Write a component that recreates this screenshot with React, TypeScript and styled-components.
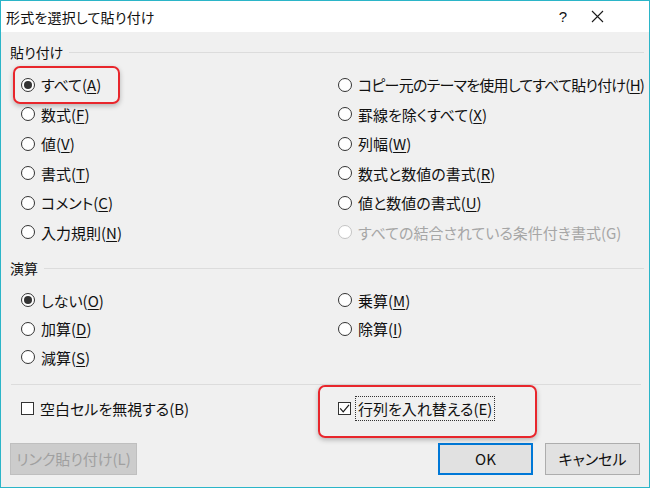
import React from 'react';
import styled, { createGlobalStyle } from 'styled-components';

const GlobalStyle = createGlobalStyle`
    html, body {
        margin: 0;
        padding: 0;
        background: #ffffff;
    }
    body {
        font-family: "Noto Sans CJK JP", "Noto Sans", sans-serif;
        font-feature-settings: "palt";
        color: #111111;
    }
`;

const Window = styled.div`
    width: 650px;
    height: 488px;
    box-sizing: border-box;
    border: 1px solid #2bb5c8;
    background: #f0f0f0;
    display: flex;
    flex-direction: column;
`;

const TitleBar = styled.div`
    height: 31px;
    background: #ffffff;
    display: flex;
    align-items: center;
    padding-left: 5px;
    padding-right: 35px;
    font-size: 14px;
    flex-shrink: 0;
`;

const Title = styled.div`
    flex: 1;
    letter-spacing: 0.2px;
`;

const TitleButton = styled.div`
    width: 34px;
    height: 31px;
    display: flex;
    align-items: center;
    justify-content: center;
    font-size: 15px;
    font-family: "Liberation Sans", sans-serif;
`;

const Body = styled.div`
    flex: 1;
    display: flex;
    flex-direction: column;
    padding: 0 9px 0 9px;
`;

const GroupHeader = styled.div<{ $top: number }>`
    display: flex;
    align-items: center;
    gap: 6px;
    margin-top: ${(p) => p.$top}px;
    height: 20px;
    font-size: 14px;
    &::after {
        content: '';
        flex: 1;
        height: 1px;
        background: #dcdcdc;
        margin-right: -4px;
    }
`;

const OptionGrid = styled.div<{ $top: number; $row: number; $rows: number }>`
    display: grid;
    grid-template-columns: 317px 1fr;
    grid-auto-flow: column;
    grid-template-rows: repeat(${(p) => p.$rows}, ${(p) => p.$row}px);
    margin-top: ${(p) => p.$top}px;
    padding-left: 11px;
`;

const Option = styled.label<{ $disabled?: boolean; $tight?: boolean }>`
    position: relative;
    display: flex;
    align-items: center;
    gap: 6px;
    font-size: 15px;
    white-space: nowrap;
    letter-spacing: ${(p) => (p.$tight ? '-0.75px' : 'normal')};
    color: ${(p) => (p.$disabled ? '#a6a6a6' : '#111111')};
`;

const Radio = styled.span<{ $checked?: boolean; $disabled?: boolean }>`
    width: 14px;
    height: 14px;
    box-sizing: border-box;
    border-radius: 50%;
    border: 1px solid ${(p) => (p.$disabled ? '#c4c4c4' : '#333333')};
    background: #ffffff;
    display: flex;
    align-items: center;
    justify-content: center;
    flex-shrink: 0;
    &::after {
        content: '';
        width: 8px;
        height: 8px;
        border-radius: 50%;
        background: ${(p) => (p.$checked ? '#333333' : 'transparent')};
    }
`;

const Key = styled.span`
    text-decoration: underline;
    text-underline-offset: 2px;
`;

const Highlight = styled.span<{ $l: number; $t: number; $r: number; $b: number }>`
    position: absolute;
    left: ${(p) => p.$l}px;
    top: ${(p) => p.$t}px;
    right: ${(p) => p.$r}px;
    bottom: ${(p) => p.$b}px;
    border: 2px solid #e8262c;
    border-radius: 7px;
    box-shadow: 0 2px 5px rgba(0, 0, 0, 0.25);
    pointer-events: none;
`;

const Separator = styled.div`
    height: 1px;
    background: #dcdcdc;
    margin: 12px 0 0 1px;
    width: 630px;
`;

const CheckRow = styled.div`
    display: grid;
    grid-template-columns: 317px 1fr;
    height: 30px;
    margin-top: 9px;
    padding-left: 11px;
`;

const Checkbox = styled.span`
    width: 13px;
    height: 13px;
    box-sizing: border-box;
    border: 1px solid #333333;
    background: #ffffff;
    flex-shrink: 0;
    display: flex;
    align-items: center;
    justify-content: center;
`;

const FocusText = styled.span`
    outline: 1px dotted #333333;
    outline-offset: 1px;
    padding: 0 1px;
`;

const Footer = styled.div`
    display: flex;
    align-items: center;
    margin-top: 19px;
    gap: 12px;
`;

const Button = styled.button<{ $variant?: 'default' | 'disabled' }>`
    height: 32px;
    width: ${(p) => (p.$variant === 'disabled' ? 127 : 95)}px;
    box-sizing: border-box;
    font-family: inherit;
    font-feature-settings: "palt";
    font-size: 15px;
    padding: 0;
    background: ${(p) => (p.$variant === 'disabled' ? '#cccccc' : '#e1e1e1')};
    border: ${(p) =>
        p.$variant === 'default'
            ? '2px solid #0078d7'
            : p.$variant === 'disabled'
            ? '1px solid #bfbfbf'
            : '1px solid #adadad'};
    color: ${(p) => (p.$variant === 'disabled' ? '#a0a0a0' : '#111111')};
`;

const Spacer = styled.div`
    flex: 1;
`;

type Opt = {
    text: string;
    key?: string;
    checked?: boolean;
    disabled?: boolean;
    mark?: boolean;
    tight?: boolean;
};

const pasteOptions: Opt[] = [
    { text: 'すべて', key: 'A', checked: true, mark: true },
    { text: '数式', key: 'F' },
    { text: '値', key: 'V' },
    { text: '書式', key: 'T' },
    { text: 'コメント', key: 'C' },
    { text: '入力規則', key: 'N' },
    { text: 'コピー元のテーマを使用してすべて貼り付け', key: 'H', tight: true },
    { text: '罫線を除くすべて', key: 'X' },
    { text: '列幅', key: 'W' },
    { text: '数式と数値の書式', key: 'R' },
    { text: '値と数値の書式', key: 'U' },
    { text: 'すべての結合されている条件付き書式(G)', disabled: true }
];

const calcOptions: Opt[] = [
    { text: 'しない', key: 'O', checked: true },
    { text: '加算', key: 'D' },
    { text: '減算', key: 'S' },
    { text: '乗算', key: 'M' },
    { text: '除算', key: 'I' }
];

const OptionItem = ({ opt }: { opt: Opt }) => (
    <Option $disabled={opt.disabled} $tight={opt.tight}>
        <Radio $checked={opt.checked} $disabled={opt.disabled} />
        <span>
            {opt.text}
            {opt.key && (
                <>
                    (<Key>{opt.key}</Key>)
                </>
            )}
        </span>
        {opt.mark && <Highlight $l={-8} $t={-4} $r={218} $b={-4} />}
    </Option>
);

export default function App() {
    return (
        <>
            <GlobalStyle />
            <Window>
                <TitleBar>
                    <Title>形式を選択して貼り付け</Title>
                    <TitleButton>?</TitleButton>
                    <TitleButton>
                        <svg width="13" height="13" viewBox="0 0 13 13">
                            <path d="M1 1 L12 12 M12 1 L1 12" stroke="#1a1a1a" strokeWidth="1.1" />
                        </svg>
                    </TitleButton>
                </TitleBar>
                <Body>
                    <GroupHeader $top={10}>貼り付け</GroupHeader>
                    <OptionGrid $top={8} $row={29.5} $rows={6}>
                        {pasteOptions.map((o) => (
                            <OptionItem key={o.text} opt={o} />
                        ))}
                    </OptionGrid>
                    <GroupHeader $top={11}>演算</GroupHeader>
                    <OptionGrid $top={8} $row={28.5} $rows={3}>
                        {calcOptions.map((o) => (
                            <OptionItem key={o.text} opt={o} />
                        ))}
                    </OptionGrid>
                    <Separator />
                    <CheckRow>
                        <Option>
                            <Checkbox />
                            <span>空白セルを無視する(B)</span>
                        </Option>
                        <Option>
                            <Checkbox>
                                <svg width="11" height="11" viewBox="0 0 11 11">
                                    <path d="M1.2 5.4 L4.2 8.8 L10 1.8" fill="none" stroke="#1a1a1a" strokeWidth="1.2" />
                                </svg>
                            </Checkbox>
                            <FocusText>行列を入れ替える(E)</FocusText>
                            <Highlight $l={-20} $t={-9} $r={103} $b={-14} />
                        </Option>
                    </CheckRow>
                    <Footer>
                        <Button $variant="disabled">リンク貼り付け(L)</Button>
                        <Spacer />
                        <Button $variant="default">OK</Button>
                        <Button>キャンセル</Button>
                    </Footer>
                </Body>
            </Window>
        </>
    );
}
